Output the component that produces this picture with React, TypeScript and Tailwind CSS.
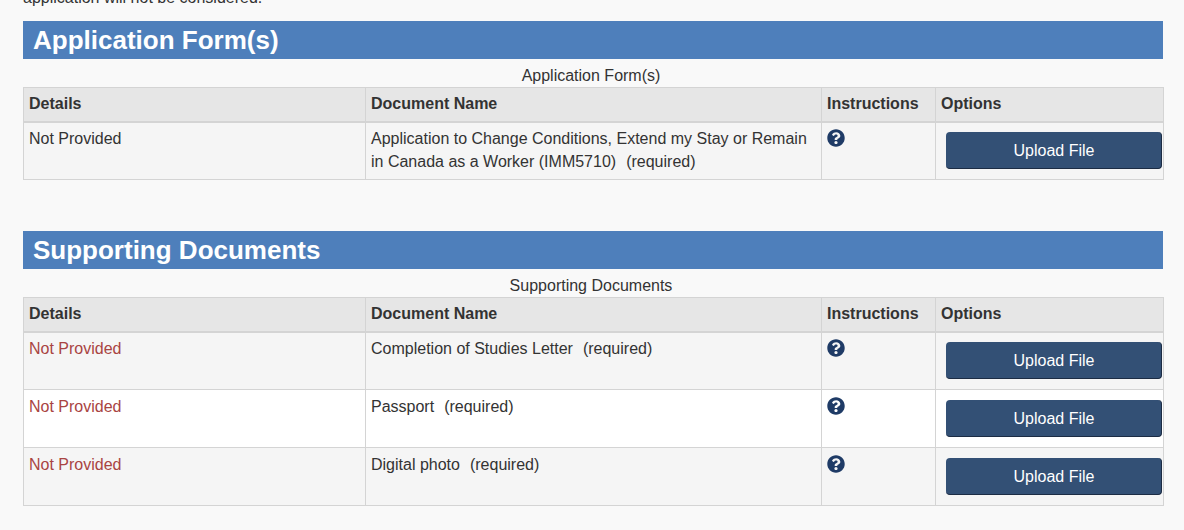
import { FaQuestionCircle } from 'react-icons/fa';

interface DocRow {
  name: string[];
  missing?: boolean;
}

const forms: DocRow[] = [
  {
    name: [
      'Application to Change Conditions, Extend my Stay or Remain',
      'in Canada as a Worker (IMM5710)',
    ],
  },
];

const supporting: DocRow[] = [
  { name: ['Completion of Studies Letter'], missing: true },
  { name: ['Passport'], missing: true },
  { name: ['Digital photo'], missing: true },
];

function DocTable({ title, rows }: { title: string; rows: DocRow[] }) {
  return (
    <section>
      <h2 className="h-[38px] bg-[#4e7fbb] pl-[10px] text-[26px] leading-[38px] font-bold text-white">
        {title}
      </h2>
      <table className="w-[1140px] table-fixed border-collapse text-[16px] leading-[23px]">
        <caption className="h-[28px] pt-[5px] pr-[5px] text-center leading-[23px] text-[#333]">{title}</caption>
        <colgroup>
          <col className="w-[342px]" />
          <col className="w-[456px]" />
          <col className="w-[114px]" />
          <col className="w-[228px]" />
        </colgroup>
        <thead>
          <tr className="h-[34px] bg-[#e6e6e6] text-left">
            <th className="border border-b-[2px] border-[#d4d4d4] px-[5px] pb-[2px] font-bold">Details</th>
            <th className="border border-b-[2px] border-[#d4d4d4] px-[5px] pb-[2px] font-bold">Document Name</th>
            <th className="border border-b-[2px] border-[#d4d4d4] px-[5px] pb-[2px] font-bold">Instructions</th>
            <th className="border border-b-[2px] border-[#d4d4d4] px-[5px] pb-[2px] font-bold">Options</th>
          </tr>
        </thead>
        <tbody>
          {rows.map((row, i) => (
            <tr key={row.name[0]} className={i % 2 === 0 ? 'h-[58px] bg-[#f5f5f5]' : 'h-[58px] bg-white'}>
              <td
                className={`border border-[#d4d4d4] px-[5px] align-top ${i === 0 ? 'pt-[4px]' : 'pt-[5px]'} ${
                  row.missing ? 'text-[#a94442]' : ''
                }`}
              >
                Not Provided
              </td>
              <td className={`border border-[#d4d4d4] px-[5px] align-top ${i === 0 ? 'pt-[4px]' : 'pt-[5px]'}`}>
                {row.name.map((line, n) => (
                  <div key={line} className="whitespace-nowrap">
                    {line}
                    {n === row.name.length - 1 && <span className="ml-[10px]">(required)</span>}
                  </div>
                ))}
              </td>
              <td className={`border border-[#d4d4d4] px-[5px] align-top ${i === 0 ? 'pt-[6px]' : 'pt-[7px]'}`}>
                <FaQuestionCircle className="h-[18px] w-[18px] text-[#1f3b66]" />
              </td>
              <td className={`border border-[#d4d4d4] pr-0 pl-[10px] align-top ${i === 0 ? 'pt-[9px]' : 'pt-[10px]'}`}>
                <button
                  type="button"
                  className="block h-[37px] w-[216px] rounded-[4px] border-r border-b border-[#1c2c44] bg-[#335075] pt-[1px] pl-[1px] text-center text-white"
                >
                  Upload File
                </button>
              </td>
            </tr>
          ))}
        </tbody>
      </table>
    </section>
  );
}

export default function App() {
  return (
    <div className="h-[530px] overflow-hidden bg-[#f9f9f9] font-['Liberation_Sans',Arial,sans-serif] text-[16px] text-[#333]">
      <div className="mx-[23px] w-[1140px]">
        <p className="-mt-[14px] mb-[12px] h-[23px] leading-[23px]">application will not be considered.</p>
        <DocTable title="Application Form(s)" rows={forms} />
        <div className="h-[51px]" />
        <DocTable title="Supporting Documents" rows={supporting} />
      </div>
    </div>
  );
}
